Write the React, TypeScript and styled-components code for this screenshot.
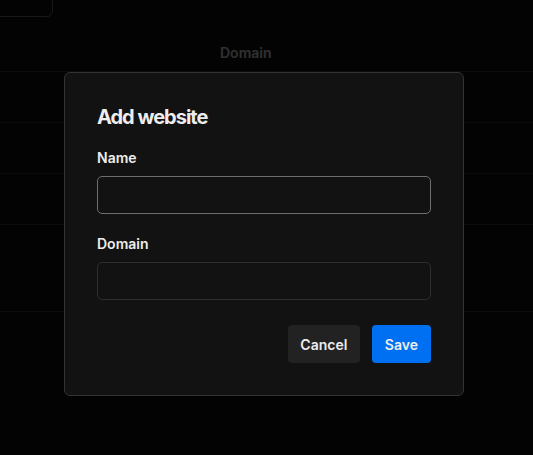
import React from "react";
import styled, { createGlobalStyle } from "styled-components";

const Global = createGlobalStyle`
  html, body { margin: 0; padding: 0; background: #111111; }
  body { font-family: Inter, "Noto Sans", sans-serif; color: #ededed; overflow: hidden; }
  * { box-sizing: border-box; }
`;

const Page = styled.div`
  width: 533px;
  height: 455px;
  background: #111111;
  display: flex;
  flex-direction: column;
`;

const Toolbar = styled.div`
  height: 17px;
  display: flex;
  align-items: flex-end;
`;

const SearchBox = styled.div`
  width: 80px;
  height: 40px;
  margin-left: -27px;
  border: 1px solid #7a7a7a;
  border-radius: 6px;
  align-self: flex-end;
`;

const Table = styled.div`
  margin-top: 18px;
  display: flex;
  flex-direction: column;
`;

const HeaderRow = styled.div`
  display: grid;
  grid-template-columns: 220px 1fr;
  height: 37px;
  padding-top: 8px;
  align-items: start;
  border-bottom: 1px solid #3a3a3a;
`;

const HeaderCell = styled.div`
  font-size: 14px;
  font-weight: 600;
  line-height: 20px;
  color: #ededed;
`;

const Row = styled.div<{ $h: number }>`
  height: ${(p) => p.$h}px;
  border-bottom: 1px solid #3a3a3a;
`;

const Overlay = styled.div`
  position: fixed;
  inset: 0;
  background: rgba(0, 0, 0, 0.8);
  display: flex;
  align-items: flex-start;
  padding: 72px 0 0 64px;
`;

const Modal = styled.div`
  width: 400px;
  background: #121212;
  border: 1px solid #333333;
  border-radius: 6px;
  padding: 32px;
  display: flex;
  flex-direction: column;
`;

const Title = styled.h2`
  margin: 0 0 19px;
  font-size: 20px;
  line-height: 24px;
  font-weight: 700;
  letter-spacing: -1px;
  color: #ededed;
`;

const Field = styled.div`
  display: flex;
  flex-direction: column;
  gap: 8px;
  margin-bottom: 20px;
`;

const Label = styled.label`
  font-size: 14px;
  line-height: 20px;
  font-weight: 600;
  color: #ededed;
`;

const Input = styled.input<{ $focus?: boolean }>`
  height: 38px;
  width: 100%;
  background: #121212;
  border: 1px solid ${(p) => (p.$focus ? "#6e6e6e" : "#2e2e2e")};
  border-radius: 5px;
  color: #ededed;
  font-family: inherit;
  font-size: 14px;
  padding: 0 12px;
  outline: none;
`;

const Actions = styled.div`
  display: flex;
  justify-content: flex-end;
  gap: 12px;
  margin-top: 5px;
`;

const Button = styled.button<{ $primary?: boolean }>`
  height: 38px;
  padding: 0 ${(p) => (p.$primary ? "13px" : "12.5px")};
  border: none;
  border-radius: 4px;
  background: ${(p) => (p.$primary ? "#0070f3" : "#222222")};
  color: #ededed;
  font-family: inherit;
  font-size: 14px;
  font-weight: 600;
`;

export default function App() {
  return (
    <>
      <Global />
      <Page>
        <Toolbar>
          <SearchBox />
        </Toolbar>
        <Table>
          <HeaderRow>
            <div />
            <HeaderCell>Domain</HeaderCell>
          </HeaderRow>
          <Row $h={51} />
          <Row $h={51} />
          <Row $h={51} />
          <Row $h={87} />
        </Table>
      </Page>
      <Overlay>
        <Modal>
          <Title>Add website</Title>
          <Field>
            <Label>Name</Label>
            <Input $focus />
          </Field>
          <Field>
            <Label>Domain</Label>
            <Input />
          </Field>
          <Actions>
            <Button>Cancel</Button>
            <Button $primary>Save</Button>
          </Actions>
        </Modal>
      </Overlay>
    </>
  );
}
